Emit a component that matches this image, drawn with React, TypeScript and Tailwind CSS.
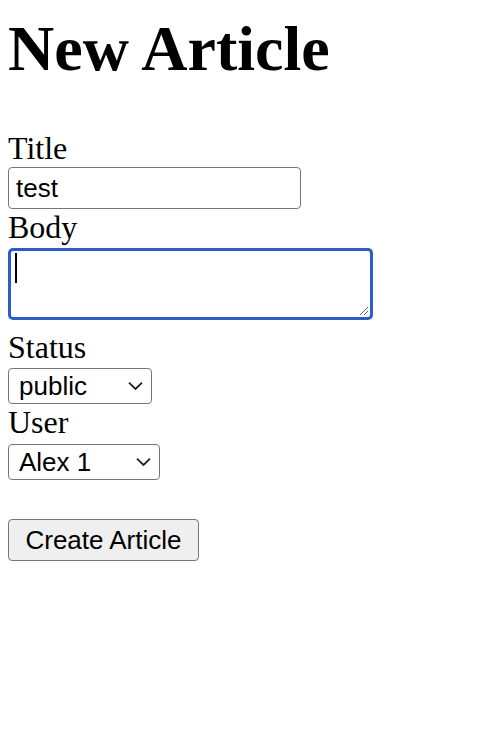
import React from "react";

const serif = "font-['Liberation_Serif','Times_New_Roman',serif]";
const sans = "font-['Liberation_Sans',Arial,sans-serif]";

function Chevron() {
  return (
    <svg width="15" height="9" viewBox="0 0 15 9" className="pointer-events-none absolute top-1/2 right-[8px] -translate-y-1/2">
      <path d="M1 1.2 L7.5 7.5 L14 1.2" fill="none" stroke="#222" strokeWidth="1.8" />
    </svg>
  );
}

function Select({ value, width }: { value: string; width: string }) {
  return (
    <div className={`relative h-[36px] ${width} rounded-[4px] border border-[#767676] bg-white`}>
      <div className={`${sans} pl-[10px] text-[26px] leading-[34px] text-black`}>{value}</div>
      <Chevron />
    </div>
  );
}

export default function App() {
  return (
    <div className={`${serif} min-h-[752px] bg-white px-[8px] text-black`}>
      <h1 className="pt-[17px] text-[64px] leading-[64px] font-bold">New Article</h1>
      <form className="mt-[49px] flex flex-col items-start">
        <label className="text-[32px] leading-[36px]">Title</label>
        <div className="mt-[1px] flex h-[42px] w-[293px] items-center rounded-[4px] border border-[#767676] bg-white pl-[7px]">
          <span className={`${sans} text-[26px] leading-[30px]`}>test</span>
        </div>
        <label className="text-[32px] leading-[36px]">Body</label>
        <div className="relative mt-[3px] h-[72px] w-[365px] rounded-[5px] border-[3px] border-[#2a5dc7] bg-white">
          <span className="absolute top-[2px] left-[4px] h-[30px] w-[2px] bg-black" />
          <svg width="10" height="10" viewBox="0 0 10 10" className="absolute right-[1px] bottom-[1px]">
            <path d="M1 9 L9 1 M5 9 L9 5" stroke="#666" strokeWidth="1" />
          </svg>
        </div>
        <label className="mt-[9px] text-[32px] leading-[36px]">Status</label>
        <div className="mt-[3px]">
          <Select value="public" width="w-[144px]" />
        </div>
        <label className="text-[32px] leading-[36px]">User</label>
        <div className="mt-[4px]">
          <Select value="Alex 1" width="w-[152px]" />
        </div>
        <button
          type="button"
          className={`${sans} mt-[39px] h-[42px] w-[191px] rounded-[4px] border border-[#767676] bg-[#efefef] text-[26px] leading-[30px] text-black`}
        >
          Create Article
        </button>
      </form>
    </div>
  );
}
